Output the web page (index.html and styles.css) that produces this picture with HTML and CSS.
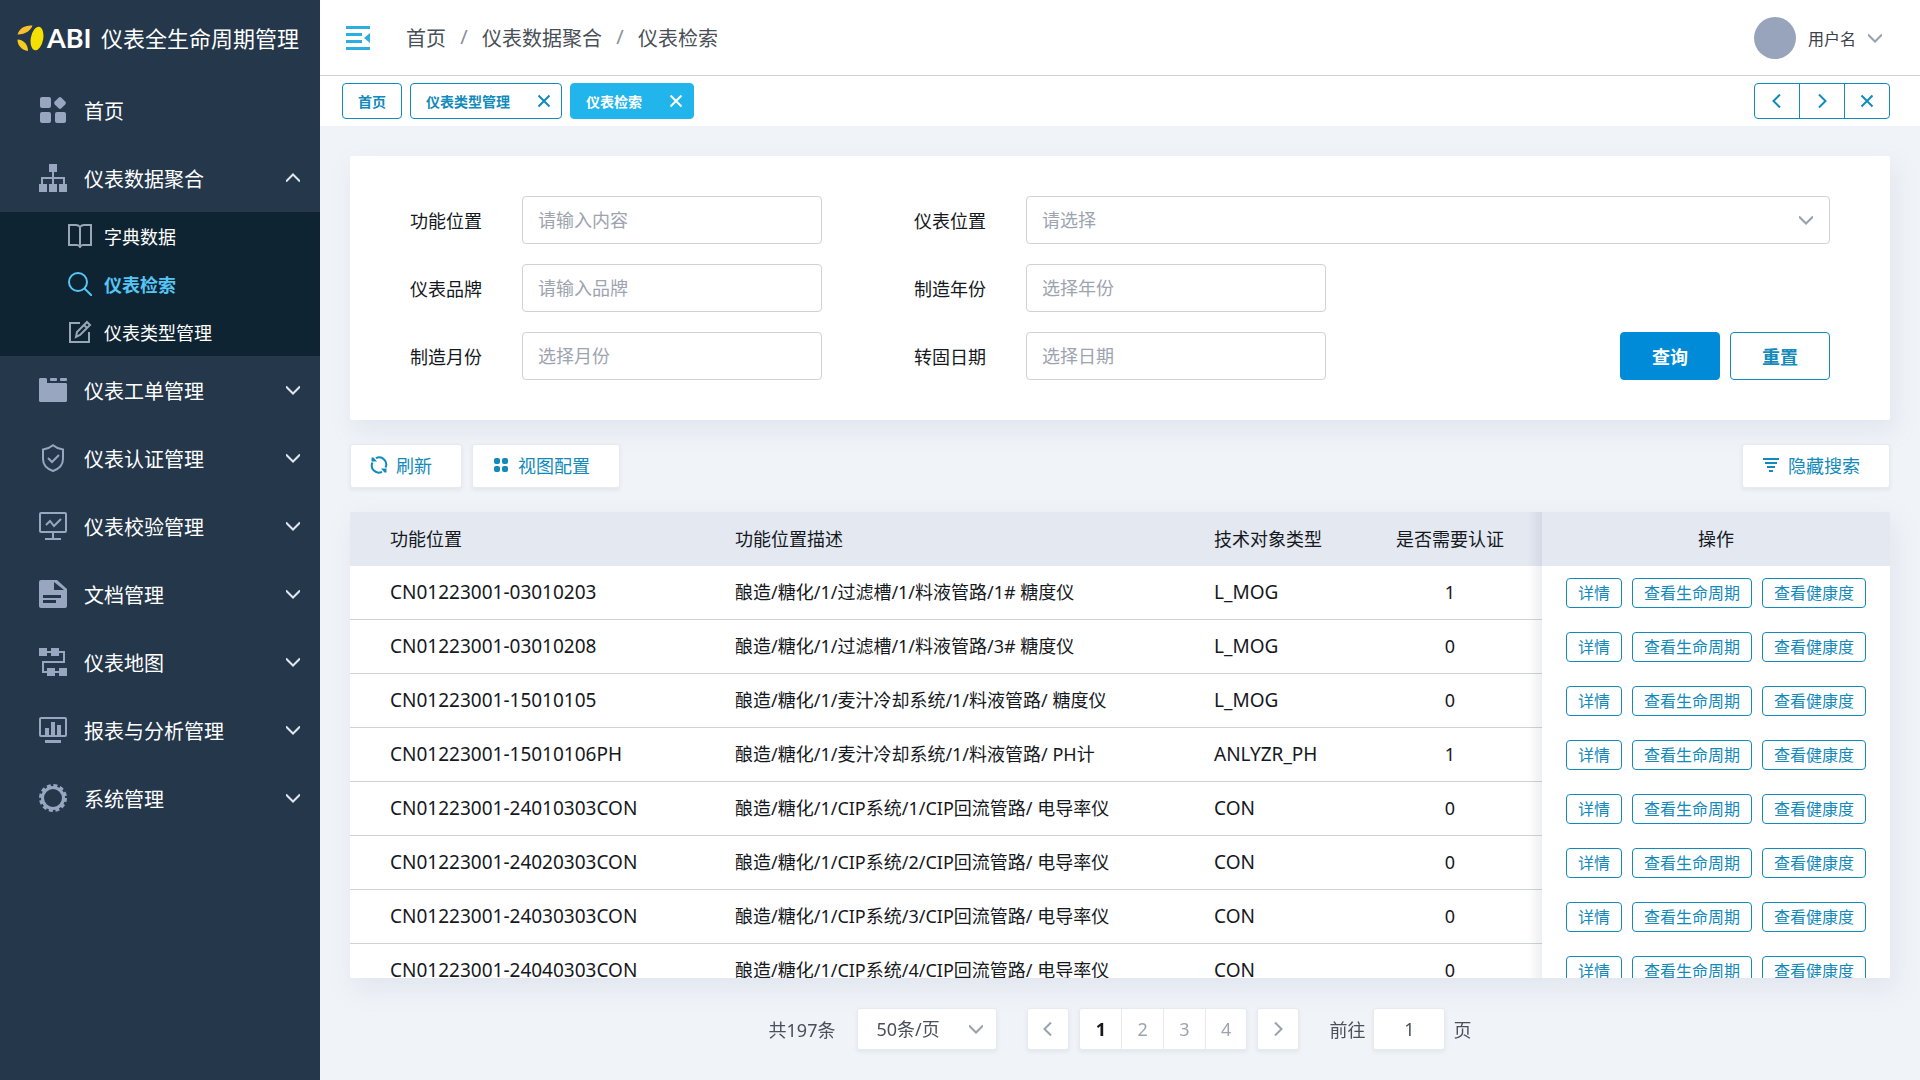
FILE: index.html
```html
<!DOCTYPE html>
<html lang="zh-CN">
<head>
<meta charset="utf-8">
<meta name="viewport" content="width=device-width, initial-scale=1">
<title>仪表检索</title>
<link rel="stylesheet" href="styles.css">
</head>
<body>
<svg class="sprite" aria-hidden="true">
  <symbol id="i-home" viewBox="0 0 28 28"><rect x="1" y="1" width="11" height="11" rx="2"/><rect x="16.300" y="2.300" width="9.400" height="9.400" rx="2" transform="rotate(45 21 7)"/><rect x="1" y="16" width="11" height="11" rx="2"/><rect x="16" y="16" width="11" height="11" rx="2"/></symbol>
  <symbol id="i-org" viewBox="0 0 28 28"><path d="M10 0h8v8h-3v5h11v7h2v8h-8v-8h4v-5h-9v5h3v8h-8v-8h3v-5H4v5h4v8H0v-8h2v-7h11V8h-3z"/></symbol>
  <symbol id="i-folder" viewBox="0 0 28 28"><path d="M1 2h6l1 1v4h19l1 1v17l-1 1H1l-1-1V3z"/><rect x="11" y="2" width="7" height="3" rx="1"/><rect x="21" y="2" width="7" height="3" rx="1"/></symbol>
  <symbol id="i-shield" viewBox="0 0 28 28"><path class="ln" d="M14 1.2c2.8 2.4 6 3.600 10 4.300V15c0 6-4.500 10-10 12C8.500 25 4 21 4 15V5.500c4-.7 7.200-1.900 10-4.300zM9 14l4 4 7-7"/></symbol>
  <symbol id="i-monitor" viewBox="0 0 28 28"><rect class="ln" x="1" y="1" width="26" height="19" rx="1"/><path class="ln" d="M14 20v7M6 27h16M7 13l4-4 4 5 7-7"/></symbol>
  <symbol id="i-doc" viewBox="0 0 28 28"><path fill-rule="evenodd" d="M2 0h16l10 9v17a2 2 0 0 1-2 2H2a2 2 0 0 1-2-2V2a2 2 0 0 1 2-2zM15 2v8h10zM4 15v3h18v-3zM4 20v3h13v-3z"/></symbol>
  <symbol id="i-map" viewBox="0 0 28 28"><path d="M0 0h8v8H0zM12 0h8v8h-8zM8 20h8v8H8zM20 20h8v8h-8z"/><path class="ln" d="M8 4h17v10H4v10h4M16 24h4"/></symbol>
  <symbol id="i-report" viewBox="0 0 28 28"><rect class="ln" x="1" y="2" width="26" height="18" rx="1"/><path d="M6 12h4v7H6zM12 6h4v13h-4zM18 9h4v10h-4zM6 24h16v3H6z"/></symbol>
  <symbol id="i-gear" viewBox="0 0 28 28"><circle cx="14" cy="14" r="10.500" fill="none" stroke="currentColor" stroke-width="3"/><circle cx="14" cy="14" r="12.600" fill="none" stroke="currentColor" stroke-width="2.800" stroke-dasharray="4 2.600"/></symbol>
  <symbol id="i-book" viewBox="0 0 24 24"><path class="ln" d="M12 3c-1-1.300-2-2-4-2H1v20h8c1.500 0 2.300.5 3 2 .7-1.500 1.500-2 3-2h8V1h-7c-2 0-3 .7-4 2zv20"/></symbol>
  <symbol id="i-search" viewBox="0 0 24 24"><circle class="ln" cx="10" cy="10" r="9"/><path class="ln" d="M16.500 16.500L24 24"/></symbol>
  <symbol id="i-edit" viewBox="0 0 24 24"><path class="ln" d="M12 3H2v19h19V12M8 17l1-5L19 2l3 3-10 10zM16 5l3 3"/></symbol>
  <symbol id="i-down" viewBox="0 0 14 14"><path class="ln" d="M0 3.500l7 7 7-7"/></symbol>
  <symbol id="i-up" viewBox="0 0 14 14"><path class="ln" d="M0 10.500l7-7 7 7"/></symbol>
  <symbol id="i-left" viewBox="0 0 14 14"><path class="ln" d="M10 .5L3.500 7l6.500 6.500"/></symbol>
  <symbol id="i-right" viewBox="0 0 14 14"><path class="ln" d="M4 .5L10.500 7 4 13.500"/></symbol>
  <symbol id="i-close" viewBox="0 0 14 14"><path class="ln" d="M1.500 1.500l11 11M12.500 1.500l-11 11"/></symbol>
</svg>
<div class="app">
  <aside class="sidebar">
    <div class="brand">
      <svg class="brand-mark" viewBox="0 0 27 27"><ellipse fill="#f5e000" cx="20" cy="13.500" rx="6.200" ry="12" transform="rotate(10 20 13.500)"/><path fill="#f9c02c" d="M15.500.5C14 5 9 9.500.5 9.500 2 4 7 0 15.500.5z"/><path fill="#f7cd1c" d="M.5 14.500C7 15 11 19.500 11 26 5 25 .5 21 .5 14.500z"/></svg>
      <span class="brand-abbr">ABI</span>
      <span class="brand-name">仪表全生命周期管理</span>
    </div>
    <nav class="menu">
      <a class="item" href="#"><svg class="ic"><use href="#i-home"/></svg><span>首页</span></a>
      <a class="item" href="#"><svg class="ic"><use href="#i-org"/></svg><span>仪表数据聚合</span><svg class="arrow"><use href="#i-up"/></svg></a>
      <div class="submenu">
        <a class="subitem" href="#"><svg class="ic"><use href="#i-book"/></svg><span>字典数据</span></a>
        <a class="subitem active" href="#"><svg class="ic"><use href="#i-search"/></svg><span>仪表检索</span></a>
        <a class="subitem" href="#"><svg class="ic"><use href="#i-edit"/></svg><span>仪表类型管理</span></a>
      </div>
      <a class="item" href="#"><svg class="ic"><use href="#i-folder"/></svg><span>仪表工单管理</span><svg class="arrow"><use href="#i-down"/></svg></a>
      <a class="item" href="#"><svg class="ic"><use href="#i-shield"/></svg><span>仪表认证管理</span><svg class="arrow"><use href="#i-down"/></svg></a>
      <a class="item" href="#"><svg class="ic"><use href="#i-monitor"/></svg><span>仪表校验管理</span><svg class="arrow"><use href="#i-down"/></svg></a>
      <a class="item" href="#"><svg class="ic"><use href="#i-doc"/></svg><span>文档管理</span><svg class="arrow"><use href="#i-down"/></svg></a>
      <a class="item" href="#"><svg class="ic"><use href="#i-map"/></svg><span>仪表地图</span><svg class="arrow"><use href="#i-down"/></svg></a>
      <a class="item" href="#"><svg class="ic"><use href="#i-report"/></svg><span>报表与分析管理</span><svg class="arrow"><use href="#i-down"/></svg></a>
      <a class="item" href="#"><svg class="ic"><use href="#i-gear"/></svg><span>系统管理</span><svg class="arrow"><use href="#i-down"/></svg></a>
    </nav>
  </aside>
  <div class="page">
    <header class="topbar">
      <button class="collapse" type="button" aria-label="收起菜单"><svg viewBox="0 0 24 24"><path d="M0 0h24v3H0zM0 7h16v3H0zM0 14h16v3H0zM0 21h24v3H0zM24 7v10l-6-5z"/></svg></button>
      <nav class="crumbs"><a href="#">首页</a><span class="sep">/</span><a href="#">仪表数据聚合</a><span class="sep">/</span><a href="#">仪表检索</a></nav>
      <button class="user" type="button"><span class="avatar"></span><span>用户名</span><svg class="chev"><use href="#i-down"/></svg></button>
    </header>
    <div class="tabs">
      <button class="tab" type="button">首页</button>
      <button class="tab closable" type="button">仪表类型管理<svg><use href="#i-close"/></svg></button>
      <button class="tab closable current" type="button">仪表检索<svg><use href="#i-close"/></svg></button>
      <div class="tabnav">
        <button type="button" aria-label="向左"><svg><use href="#i-left"/></svg></button>
        <button type="button" aria-label="向右"><svg><use href="#i-right"/></svg></button>
        <button type="button" aria-label="关闭"><svg><use href="#i-close"/></svg></button>
      </div>
    </div>
    <main class="content">
      <form class="filters">
        <label for="f-loc">功能位置</label>
        <input id="f-loc" class="field" type="text" placeholder="请输入内容">
        <label class="second" for="f-pos">仪表位置</label>
        <div class="select wide">
          <select id="f-pos" class="field"><option>请选择</option></select>
          <svg class="chev"><use href="#i-down"/></svg>
        </div>
        <label for="f-brand">仪表品牌</label>
        <input id="f-brand" class="field" type="text" placeholder="请输入品牌">
        <label class="second" for="f-year">制造年份</label>
        <input id="f-year" class="field" type="text" placeholder="选择年份">
        <label class="newrow" for="f-month">制造月份</label>
        <input id="f-month" class="field" type="text" placeholder="选择月份">
        <label class="second" for="f-date">转固日期</label>
        <input id="f-date" class="field" type="text" placeholder="选择日期">
        <div class="actions">
          <button class="btn primary" type="button">查询</button>
          <button class="btn" type="button">重置</button>
        </div>
      </form>
      <div class="toolbar">
        <button class="tool" type="button"><svg viewBox="0 0 18 18"><path class="ln" d="M6 2.200A7 7 0 0 1 15.500 11.500M12 15.800A7 7 0 0 1 2.500 6.500"/><path d="M1.500 1.500h2l3.500 4H1.500zM16.500 16.500h-2l-3.500-4h5.500z"/></svg>刷新</button>
        <button class="tool" type="button"><svg viewBox="0 0 18 18"><rect x="2" y="2" width="6" height="6" rx="2"/><rect x="10" y="2" width="6" height="6" rx="2"/><rect x="2" y="10" width="6" height="6" rx="2"/><rect x="10" y="10" width="6" height="6" rx="2"/></svg>视图配置</button>
        <button class="tool last" type="button"><svg viewBox="0 0 18 18"><path d="M1 2h16v2H1zM3 6h12v2H3zM5 10h8v2H5zM7 14h4v2H7z"/></svg>隐藏搜索</button>
      </div>
      <div class="grid">
        <table>
          <colgroup><col class="c-loc"><col class="c-desc"><col class="c-type"><col class="c-cert"><col class="c-ops"></colgroup>
          <thead><tr><th>功能位置</th><th>功能位置描述</th><th>技术对象类型</th><th class="mid">是否需要认证</th><th class="ops">操作</th></tr></thead>
          <tbody>
            <tr><td class="code">CN01223001-03010203</td><td>酿造/糖化/1/过滤槽/1/料液管路/1# 糖度仪</td><td class="code">L_MOG</td><td class="mid">1</td><td class="ops"><div class="links"><button type="button">详情</button><button type="button">查看生命周期</button><button type="button">查看健康度</button></div></td></tr>
            <tr><td class="code">CN01223001-03010208</td><td>酿造/糖化/1/过滤槽/1/料液管路/3# 糖度仪</td><td class="code">L_MOG</td><td class="mid">0</td><td class="ops"><div class="links"><button type="button">详情</button><button type="button">查看生命周期</button><button type="button">查看健康度</button></div></td></tr>
            <tr><td class="code">CN01223001-15010105</td><td>酿造/糖化/1/麦汁冷却系统/1/料液管路/ 糖度仪</td><td class="code">L_MOG</td><td class="mid">0</td><td class="ops"><div class="links"><button type="button">详情</button><button type="button">查看生命周期</button><button type="button">查看健康度</button></div></td></tr>
            <tr><td class="code">CN01223001-15010106PH</td><td>酿造/糖化/1/麦汁冷却系统/1/料液管路/ PH计</td><td class="code">ANLYZR_PH</td><td class="mid">1</td><td class="ops"><div class="links"><button type="button">详情</button><button type="button">查看生命周期</button><button type="button">查看健康度</button></div></td></tr>
            <tr><td class="code">CN01223001-24010303CON</td><td>酿造/糖化/1/CIP系统/1/CIP回流管路/ 电导率仪</td><td class="code">CON</td><td class="mid">0</td><td class="ops"><div class="links"><button type="button">详情</button><button type="button">查看生命周期</button><button type="button">查看健康度</button></div></td></tr>
            <tr><td class="code">CN01223001-24020303CON</td><td>酿造/糖化/1/CIP系统/2/CIP回流管路/ 电导率仪</td><td class="code">CON</td><td class="mid">0</td><td class="ops"><div class="links"><button type="button">详情</button><button type="button">查看生命周期</button><button type="button">查看健康度</button></div></td></tr>
            <tr><td class="code">CN01223001-24030303CON</td><td>酿造/糖化/1/CIP系统/3/CIP回流管路/ 电导率仪</td><td class="code">CON</td><td class="mid">0</td><td class="ops"><div class="links"><button type="button">详情</button><button type="button">查看生命周期</button><button type="button">查看健康度</button></div></td></tr>
            <tr><td class="code">CN01223001-24040303CON</td><td>酿造/糖化/1/CIP系统/4/CIP回流管路/ 电导率仪</td><td class="code">CON</td><td class="mid">0</td><td class="ops"><div class="links"><button type="button">详情</button><button type="button">查看生命周期</button><button type="button">查看健康度</button></div></td></tr>
          </tbody>
        </table>
      </div>
      <div class="pager">
        <span>共197条</span>
        <div class="select size">
          <select aria-label="每页条数"><option>50条/页</option></select>
          <svg class="chev"><use href="#i-down"/></svg>
        </div>
        <button class="step" type="button" aria-label="上一页"><svg class="chev"><use href="#i-left"/></svg></button>
        <div class="pages"><button class="on" type="button">1</button><button type="button">2</button><button type="button">3</button><button type="button">4</button></div>
        <button class="step" type="button" aria-label="下一页"><svg class="chev"><use href="#i-right"/></svg></button>
        <label class="jump">前往<input type="text" value="1">页</label>
      </div>
    </main>
  </div>
</div>
</body>
</html>
```
FILE: styles.css
```css
* { box-sizing: border-box; }
body {
  margin: 0;
  font-family: "Noto Sans", "Noto Sans CJK SC", sans-serif;
  font-size: 18px;
  color: #15181d;
  background: #f0f3f7;
}
button, input, select { font: inherit; color: inherit; margin: 0; padding: 0; border: 0; background: none; }
button { cursor: pointer; }
a { color: inherit; text-decoration: none; }
svg { fill: currentColor; flex: none; display: block; }
.ln { fill: none; stroke: currentColor; stroke-width: 2; }
.sprite { position: absolute; width: 0; height: 0; }

.app { display: flex; height: 100vh; }

/* Sidebar */
.sidebar { flex: none; width: 320px; background: #24374b; color: #fff; }
.brand { display: flex; align-items: center; height: 76px; padding-left: 17px; }
.brand-mark { width: 27px; height: 27px; }
.brand-abbr { font: bold 27px/36px Lato, sans-serif; margin-left: 3px; }
.brand-name { font-size: 22px; line-height: 32px; margin-left: auto; padding-right: 21px; }
.item { display: flex; align-items: center; height: 68px; padding: 0 20px 0 39px; font-size: 20px; }
.item .ic { width: 28px; height: 28px; margin-right: 17px; color: #98a6bf; }
.arrow { width: 14px; height: 14px; margin-left: auto; color: #dfe6ee; }
.submenu { background: #0f2433; }
.subitem { display: flex; align-items: center; height: 48px; padding-left: 68px; font-size: 18px; }
.subitem .ic { width: 24px; height: 24px; margin-right: 12px; color: #98a6b5; }
.subitem.active, .subitem.active .ic { color: #56c5f5; }
.subitem.active { font-weight: bold; }

/* Header */
.page { flex: 1; min-width: 0; display: flex; flex-direction: column; }
.topbar { flex: none; display: flex; align-items: center; height: 76px; padding: 0 38px 0 26px; background: #fff; border-bottom: 1px solid #d0d2d6; }
.collapse { color: #2caee0; }
.collapse svg { width: 24px; height: 24px; }
.crumbs { display: flex; margin-left: 36px; font-size: 20px; color: #4a4f57; }
.sep { width: 36px; text-align: center; color: #8a9099; }
.user { display: flex; align-items: center; gap: 12px; margin-left: auto; font-size: 16px; color: #3c414b; }
.avatar { width: 42px; height: 42px; border-radius: 50%; background: #98a4bb; }
.chev { width: 14px; height: 14px; color: #98a1b0; }
.tabs { flex: none; display: flex; align-items: center; gap: 8px; height: 50px; padding: 0 30px 0 22px; background: #fff; }
.tab { display: flex; align-items: center; height: 36px; padding: 0 15px; border: 1px solid #128abb; border-radius: 4px; color: #128abb; font-size: 14px; font-weight: bold; }
.closable { padding-right: 10px; gap: 27px; }
.tab svg { width: 14px; height: 14px; }
.current { border-color: #21b5ec; background: #21b5ec; color: #fff; }
.tabnav { display: flex; width: 136px; height: 36px; margin-left: auto; border: 1px solid #128abb; border-radius: 4px; color: #128abb; }
.tabnav button { display: flex; flex: 1; align-items: center; justify-content: center; }
.tabnav button + button { border-left: 1px solid #128abb; }
.tabnav svg { width: 14px; height: 14px; }

/* Search form */
.content { flex: 1; min-height: 0; display: flex; flex-direction: column; padding: 30px 30px 31px; }
.filters { flex: none; display: grid; grid-template-columns: 112px 300px 204px 300px 1fr; row-gap: 20px; align-items: center; align-content: start; min-height: 264px; padding: 40px 60px; background: #fff; border-radius: 2px; box-shadow: 4px 10px 24px rgba(150, 155, 200, .16); }
.filters .second { padding-left: 92px; }
.newrow { grid-column: 1; }
.field { width: 100%; height: 48px; padding: 0 15px; border: 1px solid #cfd1d6; border-radius: 4px; background: #fff; }
.field::placeholder { color: #9da4b0; opacity: 1; }
select { appearance: none; width: 100%; }
select.field { color: #9da4b0; }
.select { display: grid; align-items: center; }
.select > * { grid-area: 1 / 1; }
.select .chev { justify-self: end; margin-right: 17px; pointer-events: none; }
.wide { grid-column: span 2; }
.actions { display: flex; justify-content: flex-end; gap: 10px; }
.btn { width: 100px; height: 48px; border: 1px solid #128abb; border-radius: 4px; color: #128abb; font-weight: bold; }
.primary { border-color: #008bd8; background: #008bd8; color: #fff; }

/* Toolbar */
.toolbar { flex: none; display: flex; gap: 10px; margin: 24px 0; }
.tool { display: flex; align-items: center; gap: 8px; height: 44px; padding: 0 29px 2px 19px; border: 1px solid #e6e9f0; border-radius: 3px; background: #fff; color: #128abb; box-shadow: 0 2px 4px rgba(120, 130, 160, .12); }
.tool svg { width: 18px; height: 18px; }
.last { margin-left: auto; }

/* Table */
.grid { flex: 1; min-height: 0; overflow: auto; scrollbar-width: none; background: #fff; box-shadow: 4px 10px 24px rgba(150, 155, 200, .16); }
table { width: 100%; table-layout: fixed; border-collapse: separate; border-spacing: 0; }
.c-loc { width: 345px; }
.c-type, .c-cert { width: 184px; }
.c-ops { width: 348px; }
th, td { height: 54px; padding: 0 0 0 40px; text-align: left; font-weight: normal; line-height: 24px; white-space: nowrap; }
th { position: sticky; top: 0; z-index: 2; background: #e3e8f1; }
td { padding-bottom: 2px; border-bottom: 1px solid #d0d3d6; }
.code { font-size: 19px; }
.mid { padding-left: 0; text-align: center; }
.ops { position: sticky; right: 0; padding-left: 0; text-align: center; border-bottom: 0; }
td.ops { padding-bottom: 0; background: #fff; }
.ops::before { content: ""; position: absolute; top: 0; bottom: 0; left: -14px; width: 14px; background: linear-gradient(to left, rgba(90, 100, 120, .1), rgba(90, 100, 120, 0)); }
.links { display: flex; gap: 10px; padding-left: 24px; }
.links button { height: 30px; padding: 0 11px; border: 1px solid #128abb; border-radius: 4px; color: #128abb; font-size: 16px; line-height: 24px; }

/* Pagination */
.pager { flex: none; display: flex; align-items: center; justify-content: center; height: 40px; margin-top: 31px; color: #4a505a; }
.size { width: 140px; height: 42px; margin: 0 30px 0 22px; }
.size select { height: 42px; padding-left: 18px; }
.size select, .step, .pages, .jump input { background: #fff; border-radius: 3px; border: 1px solid #e6e9f0; box-shadow: 0 2px 4px rgba(120, 130, 160, .12); }
.size .chev { margin-right: 14px; }
.step { display: flex; align-items: center; justify-content: center; width: 42px; height: 42px; }
.pages { display: flex; width: 168px; height: 42px; margin: 0 10px; }
.pages button { flex: 1; color: #9da4b0; }
.pages button + button { border-left: 1px solid #e6e9f0; }
.pages .on { color: #15181d; font-weight: bold; }
.jump { display: flex; align-items: center; gap: 8px; margin-left: 30px; }
.jump input { width: 72px; height: 42px; text-align: center; }
```
